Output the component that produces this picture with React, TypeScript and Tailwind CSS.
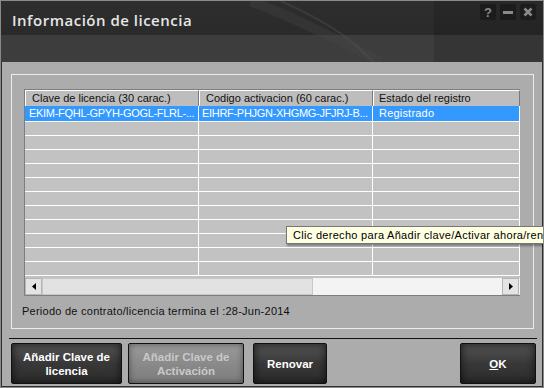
import React from 'react';

const rows = Array.from({ length: 12 });

function TitleButton({ children }: { children: React.ReactNode }) {
  return (
    <div className="w-[16px] h-[16px] rounded-[2px] bg-[#1c1c1c] flex items-center justify-center text-[#8a8a8a]">
      {children}
    </div>
  );
}

function DialogButton({
  children,
  width,
  disabled,
}: {
  children: React.ReactNode;
  width: string;
  disabled?: boolean;
}) {
  return (
    <div
      className={`${width} h-[41px] rounded-[2px] border border-[#111] flex flex-col items-center justify-center text-[11.5px] leading-[14px] font-bold text-center ${
        disabled
          ? 'bg-gradient-to-b from-[#9a9a9a] via-[#8a8a8a] to-[#7c7c7c] text-[#c9c9c9] shadow-[inset_0_0_6px_rgba(0,0,0,0.45)]'
          : 'bg-gradient-to-b from-[#555] via-[#383838] to-[#2c2c2c] text-white shadow-[inset_0_0_8px_rgba(0,0,0,0.7)]'
      }`}
    >
      {children}
    </div>
  );
}

export default function App() {
  return (
    <div
      className="w-[544px] h-[388px] overflow-hidden relative border border-[#8a8a8a] bg-[#2f2f2f] flex flex-col"
      style={{ fontFamily: '"Liberation Sans", Arial, sans-serif' }}
    >
      {/* title bar */}
      <div className="relative h-[61px] shrink-0 flex flex-col">
        <div className="h-[34px] bg-gradient-to-b from-[#2e2e2e] to-[#2a2a2a]"></div>
        <div className="h-[27px] bg-[#3d3d3d]"></div>
        <svg className="absolute inset-0 pointer-events-none" width="542" height="61">
          <path d="M250 0 C 300 20, 340 40, 380 61" stroke="#4a4a4a" strokeWidth="10" fill="none" opacity="0.3" />
          <path d="M280 0 C 320 18, 350 36, 372 61" stroke="#555" strokeWidth="2" fill="none" opacity="0.35" />
          <rect x="433" y="0" width="109" height="61" fill="#000" opacity="0.12" />
        </svg>
        <div className="absolute left-[11px] top-[8px] text-[15px] font-semibold tracking-[0.5px] text-[#e6e6e6]" style={{ fontFamily: '"Open Sans", "Liberation Sans", sans-serif' }}>
          Información de licencia
        </div>
        <div className="absolute right-[7px] top-[3px] flex gap-[4px]">
          <TitleButton>
            <span className="text-[13px] font-bold leading-none">?</span>
          </TitleButton>
          <TitleButton>
            <div className="w-[10px] h-[3px] bg-[#8a8a8a]"></div>
          </TitleButton>
          <TitleButton>
            <svg width="10" height="10" viewBox="0 0 10 10">
              <path d="M1.5 1.5 L8.5 8.5 M8.5 1.5 L1.5 8.5" stroke="#8a8a8a" strokeWidth="2.6" />
            </svg>
          </TitleButton>
        </div>
      </div>

      {/* body */}
      <div className="flex-1 mx-[1px] mb-[1px] bg-[#acacac] flex flex-col">
        <div className="ml-[9px] mr-[8px] mt-[12px] h-[255px] border border-[#ececec] pl-[12px] pt-[14px]">
          <div className="w-[496px] h-[207px] border-l border-t border-b border-[#7e7e7e] flex flex-col text-[11px]">
            <div className="h-[16px] flex text-[#111]">
              <div className="w-[174px] border-t border-l border-t-white border-l-white border-r border-r-[#7a7a7a] bg-[#bdbdbd] pl-[6px] leading-[14px]">
                Clave de licencia (30 carac.)
              </div>
              <div className="w-[174px] border-t border-l border-t-white border-l-white border-r border-r-[#7a7a7a] bg-[#bdbdbd] pl-[6px] leading-[14px]">
                Codigo activacion (60 carac.)
              </div>
              <div className="w-[147px] border-t border-l border-t-white border-l-white border-r border-r-[#7a7a7a] bg-[#bdbdbd] pl-[5px] leading-[14px]">
                Estado del registro
              </div>
            </div>
            <div className="h-[172px] overflow-hidden bg-[#c2c2c2]">
              {rows.map((_, i) => (
                <div
                  key={i}
                  className={`flex border-b border-white ${i === 0 ? 'h-[16px] bg-[#3399ff] text-white' : 'h-[14px]'}`}
                >
                  <div className="w-[174px] border-r border-white pl-[4px] leading-[14px] whitespace-nowrap overflow-hidden tracking-[-0.3px]">
                    {i === 0 ? 'EKIM-FQHL-GPYH-GOGL-FLRL-...' : ''}
                  </div>
                  <div className="w-[174px] border-r border-white pl-[3px] leading-[14px] whitespace-nowrap overflow-hidden tracking-[-0.3px]">
                    {i === 0 ? 'EIHRF-PHJGN-XHGMG-JFJRJ-B...' : ''}
                  </div>
                  <div className="w-[147px] border-r border-white pl-[6px] leading-[14px] tracking-[0.2px]">
                    {i === 0 ? 'Registrado' : ''}
                  </div>
                </div>
              ))}
            </div>
            <div className="h-[17px] flex bg-[#f3f3f3]">
              <div className="w-[17px] h-[17px] bg-[#e4e4e4] border border-[#b5b5b5] flex items-center justify-center">
                <svg width="4" height="7" viewBox="0 0 4 7">
                  <path d="M4 0 L0 3.5 L4 7 Z" fill="#000" />
                </svg>
              </div>
              <div className="w-[271px] h-[17px] bg-[#e2e2e2] border border-[#c8c8c8]"></div>
              <div className="flex-1"></div>
              <div className="w-[17px] h-[17px] bg-[#e4e4e4] border border-[#b5b5b5] flex items-center justify-center mr-[1px]">
                <svg width="4" height="7" viewBox="0 0 4 7">
                  <path d="M0 0 L4 3.5 L0 7 Z" fill="#000" />
                </svg>
              </div>
            </div>
          </div>
          <div className="mt-[8px] -ml-[2px] text-[11px] leading-[14px] tracking-[0.25px] text-[#111]">
            Periodo de contrato/licencia termina el :28-Jun-2014
          </div>
        </div>

        <div className="ml-[7px] w-[528px] h-[1px] bg-[#111] mt-[9px]"></div>

        <div className="mt-[4px] ml-[9px] mr-[6px] flex">
          <DialogButton width="w-[111px]">
            <span>Añadir Clave de</span>
            <span>licencia</span>
          </DialogButton>
          <div className="ml-[6px]">
            <DialogButton width="w-[116px]" disabled>
              <span>Añadir Clave de</span>
              <span>Activación</span>
            </DialogButton>
          </div>
          <div className="ml-[9px]">
            <DialogButton width="w-[74px]">
              <span>Renovar</span>
            </DialogButton>
          </div>
          <div className="ml-auto">
            <DialogButton width="w-[76px]">
              <span>
                <span className="underline">O</span>K
              </span>
            </DialogButton>
          </div>
        </div>
      </div>

      {/* tooltip */}
      <div className="absolute left-[285px] top-[225px] w-[300px] h-[18px] bg-[#ffffe1] border border-[#767676] shadow-[1px_2px_2px_rgba(0,0,0,0.35)] pl-[6px] text-[11px] leading-[16px] tracking-[0.3px] text-black whitespace-nowrap">
        Clic derecho para Añadir clave/Activar ahora/renovar
      </div>
    </div>
  );
}
